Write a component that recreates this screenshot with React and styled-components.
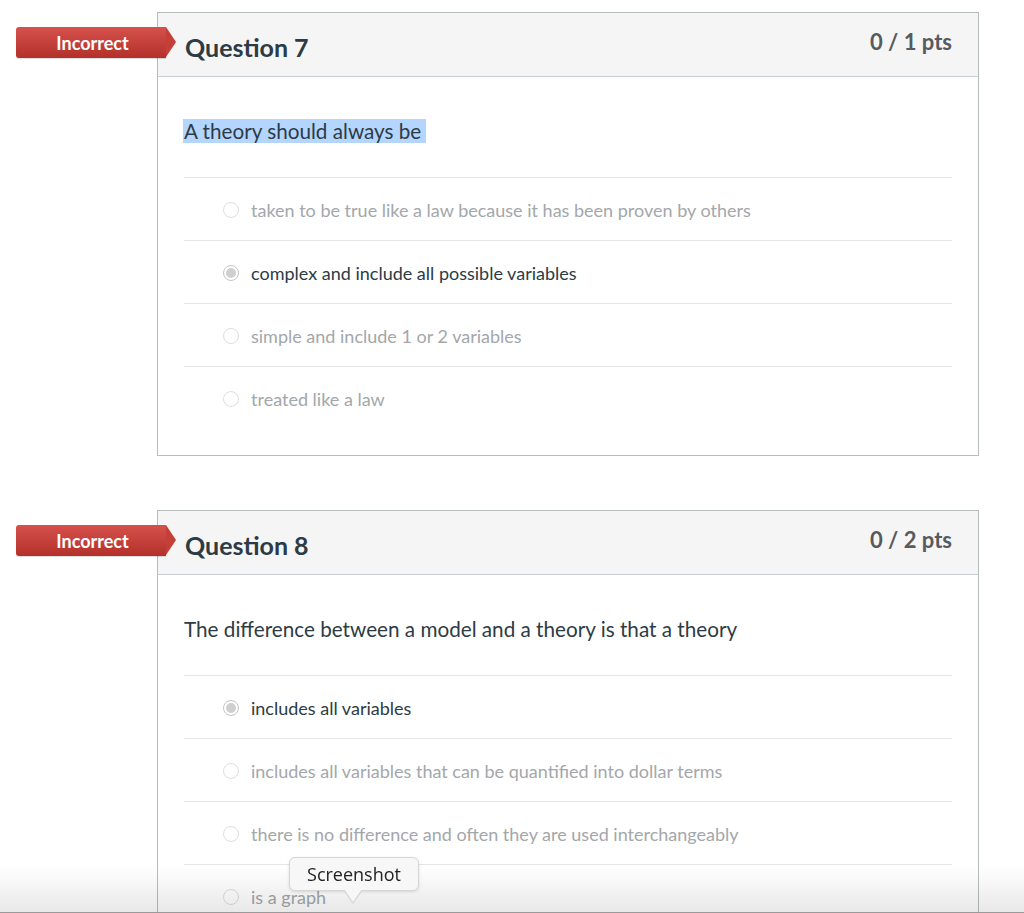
import React from 'react';
import styled, { createGlobalStyle } from 'styled-components';

const GlobalStyle = createGlobalStyle`
  html, body {
    margin: 0;
    padding: 0;
    background: #fff;
    font-family: Lato, "Open Sans", "Liberation Sans", sans-serif;
    overflow: hidden;
  }
`;

const Page = styled.div`
  padding: 12px 0 0 157px;
  width: 822px;
`;

const Card = styled.section`
  position: relative;
  border: 1px solid #b7bcbf;
  background: #fff;
  margin-bottom: 54px;
`;

const Header = styled.header`
  height: 63px;
  background: #f5f5f5;
  border-bottom: 1px solid #c7cdd1;
  display: flex;
  justify-content: space-between;
  padding: 0 26px 0 27px;
`;

const Title = styled.h2`
  margin: 0;
  padding-top: 19px;
  font-size: 25px;
  font-weight: 700;
  color: #2d3b45;
  line-height: 30px;
`;

const Points = styled.div`
  padding-top: 15px;
  font-size: 22px;
  font-weight: 700;
  color: #555b5f;
  line-height: 28px;
`;

const Badge = styled.div`
  position: absolute;
  left: -142px;
  top: 14px;
  width: 150px;
  height: 31px;
  background: linear-gradient(#d6514b, #b3302b);
  border-radius: 3px 0 0 3px;
  color: #fff;
  font-size: 18px;
  font-weight: 700;
  display: flex;
  align-items: center;
  justify-content: center;
  padding-left: 3px;
  box-sizing: border-box;
  box-shadow: 0 1px 1px rgba(0, 0, 0, 0.15);

  &::after {
    content: '';
    position: absolute;
    right: -10px;
    top: 0;
    border-top: 15.5px solid transparent;
    border-bottom: 15.5px solid transparent;
    border-left: 10px solid #c53f39;
  }
`;

const Body = styled.div`
  padding: 40px 26px 26px 26px;
`;

const QuestionText = styled.p`
  margin: 0 0 32px 0;
  font-size: 20.7px;
  line-height: 28px;
  color: #2d3b45;
`;

const Highlight = styled.span`
  background: #b4d5fe;
  padding: 0 5px 0 1px;
  margin-left: -1px;
`;

const Answer = styled.div`
  border-top: 1px solid #e6e6e6;
  display: flex;
  align-items: center;
  padding: 2px 0 0 39px;
  box-sizing: border-box;
  height: 63px;
  font-size: 18px;
  color: ${(p) => (p.$selected ? '#2d3b45' : '#a3a7aa')};
`;

const Radio = styled.span`
  width: 16px;
  height: 16px;
  border-radius: 50%;
  border: 1px solid ${(p) => (p.$selected ? '#c4c4c4' : '#dedede')};
  box-sizing: border-box;
  margin-right: 12px;
  display: flex;
  align-items: center;
  justify-content: center;
  background: #fff;

  &::after {
    content: '';
    display: ${(p) => (p.$selected ? 'block' : 'none')};
    width: 10px;
    height: 10px;
    border-radius: 50%;
    background: #cfcfcf;
  }
`;

const BottomShade = styled.div`
  position: fixed;
  left: 0;
  right: 0;
  bottom: 0;
  height: 46px;
  background: linear-gradient(rgba(0, 0, 0, 0), rgba(0, 0, 0, 0.09));
  border-bottom: 1px solid #9a9a9a;
  pointer-events: none;
`;

const Tooltip = styled.div`
  position: fixed;
  left: 289px;
  top: 857px;
  width: 130px;
  height: 34px;
  box-sizing: border-box;
  background: #f7f7f7;
  border: 1px solid #d6d6d6;
  border-radius: 6px;
  box-shadow: 0 1px 3px rgba(0, 0, 0, 0.12);
  font-family: "Open Sans", "Liberation Sans", sans-serif;
  font-size: 18px;
  color: #222;
  display: flex;
  align-items: center;
  justify-content: center;

  &::before {
    content: '';
    position: absolute;
    left: 53px;
    bottom: -14px;
    border-left: 10px solid transparent;
    border-right: 10px solid transparent;
    border-top: 14px solid #d6d6d6;
  }
  &::after {
    content: '';
    position: absolute;
    left: 54px;
    bottom: -12px;
    border-left: 9px solid transparent;
    border-right: 9px solid transparent;
    border-top: 13px solid #f7f7f7;
  }
`;

const questions = [
  {
    title: 'Question 7',
    pts: '0 / 1 pts',
    text: 'A theory should always be',
    highlighted: true,
    answers: [
      'taken to be true like a law because it has been proven by others',
      'complex and include all possible variables',
      'simple and include 1 or 2 variables',
      'treated like a law',
    ],
    selected: 1,
  },
  {
    title: 'Question 8',
    pts: '0 / 2 pts',
    text: 'The difference between a model and a theory is that a theory',
    highlighted: false,
    answers: [
      'includes all variables',
      'includes all variables that can be quantified into dollar terms',
      'there is no difference and often they are used interchangeably',
      'is a graph',
    ],
    selected: 0,
  },
];

const App = () => (
  <>
    <GlobalStyle />
    <Page>
      {questions.map((q) => (
        <Card key={q.title}>
          <Badge>Incorrect</Badge>
          <Header>
            <Title>{q.title}</Title>
            <Points>{q.pts}</Points>
          </Header>
          <Body>
            <QuestionText>
              {q.highlighted ? <Highlight>{q.text}</Highlight> : q.text}
            </QuestionText>
            {q.answers.map((a, i) => (
              <Answer key={a} $selected={i === q.selected}>
                <Radio $selected={i === q.selected} />
                {a}
              </Answer>
            ))}
          </Body>
        </Card>
      ))}
    </Page>
    <BottomShade />
    <Tooltip>Screenshot</Tooltip>
  </>
);

export default App;
